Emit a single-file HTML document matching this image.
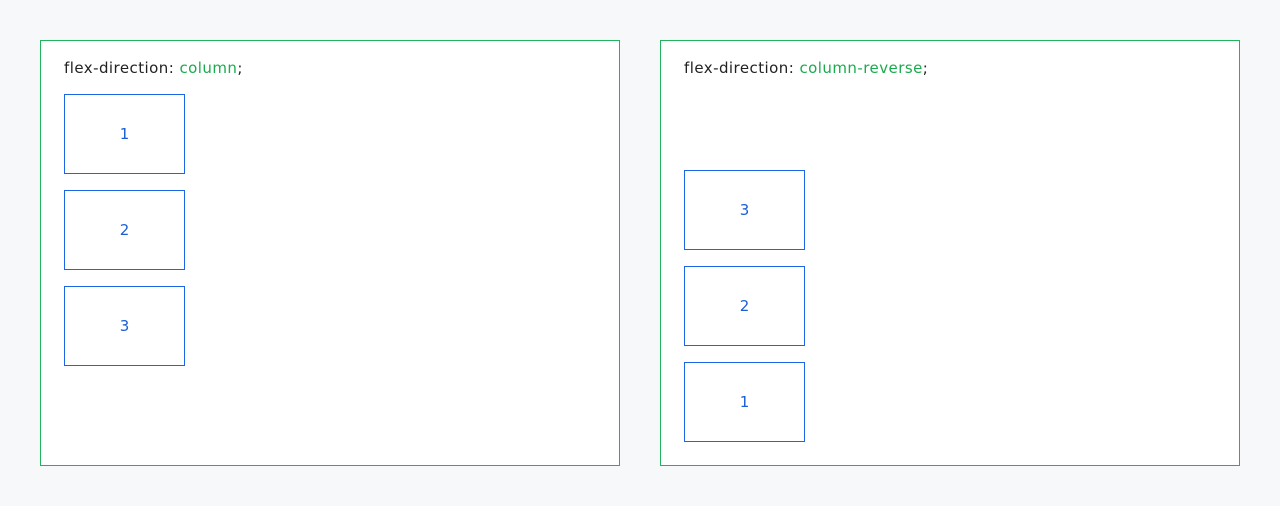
<!DOCTYPE html>
<html><head><style>
body{margin:0;width:1280px;height:506px;background:#f7f8fa;font-family:"DejaVu Sans","Liberation Sans",sans-serif;position:relative;overflow:hidden}
.panel{position:absolute;top:40px;width:578px;height:424px;border:1px solid #1db954;border-color:#22b35e;background:#fff}
.lbl{position:absolute;left:23px;top:18px;font-size:15px;color:#222;letter-spacing:0.45px;white-space:nowrap}
.lbl span{color:#1aab4e}
.box{position:absolute;left:23px;width:119px;height:78px;border:1px solid #1a66e6;color:#1a5fd6;font-size:15px;display:flex;align-items:center;justify-content:center}
</style></head><body>
<div class="panel" style="left:40px">
<div class="lbl">flex-direction: <span>column</span>;</div>
<div class="box" style="top:53px">1</div>
<div class="box" style="top:149px">2</div>
<div class="box" style="top:245px">3</div>
</div>
<div class="panel" style="left:660px">
<div class="lbl">flex-direction: <span>column-reverse</span>;</div>
<div class="box" style="top:129px">3</div>
<div class="box" style="top:225px">2</div>
<div class="box" style="top:321px">1</div>
</div>
</body></html>
